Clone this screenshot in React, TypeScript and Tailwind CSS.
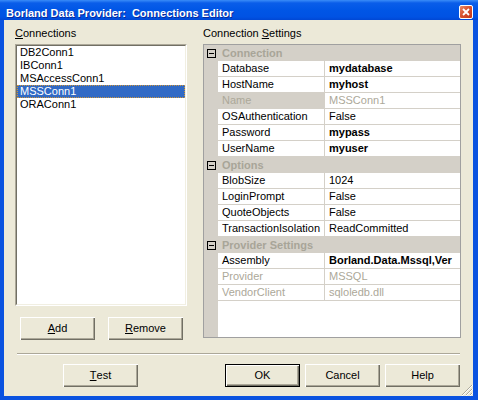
import React from 'react';

type Row =
  | { cat: string }
  | { name: string; value: string; bold?: boolean; disabled?: boolean; selected?: boolean };

const rows: Row[] = [
  { cat: 'Connection' },
  { name: 'Database', value: 'mydatabase', bold: true },
  { name: 'HostName', value: 'myhost', bold: true },
  { name: 'Name', value: 'MSSConn1', disabled: true, selected: true },
  { name: 'OSAuthentication', value: 'False' },
  { name: 'Password', value: 'mypass', bold: true },
  { name: 'UserName', value: 'myuser', bold: true },
  { cat: 'Options' },
  { name: 'BlobSize', value: '1024' },
  { name: 'LoginPrompt', value: 'False' },
  { name: 'QuoteObjects', value: 'False' },
  { name: 'TransactionIsolation', value: 'ReadCommitted' },
  { cat: 'Provider Settings' },
  { name: 'Assembly', value: 'Borland.Data.Mssql,Ver', bold: true },
  { name: 'Provider', value: 'MSSQL', disabled: true },
  { name: 'VendorClient', value: 'sqloledb.dll', disabled: true },
];

const items = ['DB2Conn1', 'IBConn1', 'MSAccessConn1', 'MSSConn1', 'ORAConn1'];

function Btn({ children, def }: { children: React.ReactNode; def?: boolean }) {
  return (
    <div
      className={
        'w-[75px] h-[23px] flex items-center justify-center bg-[#ECE9D8] leading-[13px] ' +
        (def
          ? 'border border-black shadow-[inset_1px_1px_0_#ffffff,inset_-1px_-1px_0_#716F64,inset_-2px_-2px_0_#ACA899]'
          : 'shadow-[inset_1px_1px_0_#ffffff,inset_-1px_-1px_0_#716F64,inset_-2px_-2px_0_#ACA899]')
      }
    >
      {children}
    </div>
  );
}

function Minus() {
  return (
    <svg width="9" height="9" viewBox="0 0 9 9">
      <rect x="0.5" y="0.5" width="8" height="8" fill="#D4D0C8" stroke="#000" />
      <line x1="2" y1="4.5" x2="7" y2="4.5" stroke="#000" />
    </svg>
  );
}

export default function App() {
  return (
    <div className="w-[478px] h-[400px] flex flex-col bg-[#0a52e0] font-['Liberation_Sans',Arial,sans-serif] text-[11px] text-black overflow-hidden">
      <div className="h-[20px] flex items-start bg-[linear-gradient(to_bottom,#3a8cf8_0%,#0a5de9_15%,#0056e6_50%,#0052e3_85%,#0047d4_100%)]">
        <div className="mt-[8px] ml-[6px] text-white font-bold leading-[11px] whitespace-pre [text-shadow:1px_1px_0_#0a2a9c]">
          Borland Data Provider:  Connections Editor
        </div>
        <div className="ml-auto mt-[5px] mr-[5px] w-[14px] h-[14px] rounded-[2px] border border-white bg-[linear-gradient(135deg,#e88a6a_0%,#d9532f_45%,#c2361a_100%)] flex items-center justify-center">
          <svg width="8" height="8" viewBox="0 0 8 8">
            <path d="M1 1 L7 7 M7 1 L1 7" stroke="#fff" strokeWidth="1.8" />
          </svg>
        </div>
      </div>

      <div className="flex-1 flex flex-col bg-[#ECE9D8] ml-[4px] mr-[5px] mb-[4px] relative">
        <div className="flex pl-[11px] pt-[7px]">
          <div className="w-[172px] flex flex-col">
            <div className="h-[13px] leading-[13px]">
              <span className="underline">C</span>onnections
            </div>
            <div className="mt-[4px] h-[262px] border border-t-[#ACA899] border-l-[#ACA899] border-r-white border-b-white">
              <div className="h-full bg-white border border-t-[#716F64] border-l-[#716F64] border-r-[#F1EFE2] border-b-[#F1EFE2]">
                {items.map((it) => (
                  <div
                    key={it}
                    className={
                      'h-[13px] leading-[11px] pl-[2px] border ' +
                      (it === 'MSSConn1'
                        ? 'bg-[#316AC5] text-white border-dotted border-[#ce953a]'
                        : 'border-transparent')
                    }
                  >
                    {it}
                  </div>
                ))}
              </div>
            </div>
            <div className="mt-[11px] flex gap-[13px] pl-[5px]">
              <Btn>
                <span className="underline">A</span>dd
              </Btn>
              <Btn>
                <span className="underline">R</span>emove
              </Btn>
            </div>
          </div>

          <div className="ml-[16px] w-[258px] flex flex-col">
            <div className="h-[13px] leading-[13px]">
              Connection <span className="underline">S</span>ettings
            </div>
            <div className="mt-[4px] h-[294px] border border-[#A0A0A0] bg-white flex flex-col overflow-hidden">
              {rows.map((r, i) =>
                'cat' in r ? (
                  <div key={i} className="h-[16px] flex bg-[#D4D0C8]">
                    <div className="w-[14px] flex items-center justify-center">
                      <Minus />
                    </div>
                    <div className="pl-[4px] leading-[16px] font-bold text-[#A8A598]">{r.cat}</div>
                  </div>
                ) : (
                  <div key={i} className="h-[16px] flex">
                    <div className="w-[14px] bg-[#D4D0C8]" />
                    <div
                      className={
                        'w-[107px] pl-[4px] leading-[15px] whitespace-nowrap overflow-hidden border-b border-r border-[#D4D0C8] ' +
                        (r.selected ? 'bg-[#D4D0C8] ' : '') +
                        (r.disabled ? 'text-[#ACA899]' : '')
                      }
                    >
                      {r.name}
                    </div>
                    <div
                      className={
                        'flex-1 pl-[4px] leading-[15px] whitespace-nowrap overflow-hidden border-b border-[#D4D0C8] ' +
                        (r.bold ? 'font-bold ' : '') +
                        (r.disabled ? 'text-[#ACA899]' : '')
                      }
                    >
                      {r.value}
                    </div>
                  </div>
                )
              )}
              <div className="flex-1 flex">
                <div className="w-[14px] bg-[#D4D0C8]" />
                <div className="flex-1" />
              </div>
            </div>
          </div>
        </div>

        <div className="mt-[13px] ml-[13px] mr-[13px] h-[2px] border-t border-t-[#ACA899] border-b border-b-white" />

        <div className="mt-[9px] flex pr-[13px]">
          <div className="ml-[59px]">
            <Btn>
              <span className="underline">T</span>est
            </Btn>
          </div>
          <div className="ml-auto flex gap-[5px]">
            <Btn def>OK</Btn>
            <Btn>Cancel</Btn>
            <Btn>Help</Btn>
          </div>
        </div>

        <svg className="absolute right-0 bottom-0" width="12" height="12" viewBox="0 0 12 12">
          <path d="M11 1 L1 11 M11 5 L5 11 M11 9 L9 11" stroke="#ACA899" strokeWidth="1" />
          <path d="M12 1 L1 12 M12 5 L5 12 M12 9 L9 12" stroke="#ffffff" strokeWidth="1" />
        </svg>
      </div>
    </div>
  );
}
